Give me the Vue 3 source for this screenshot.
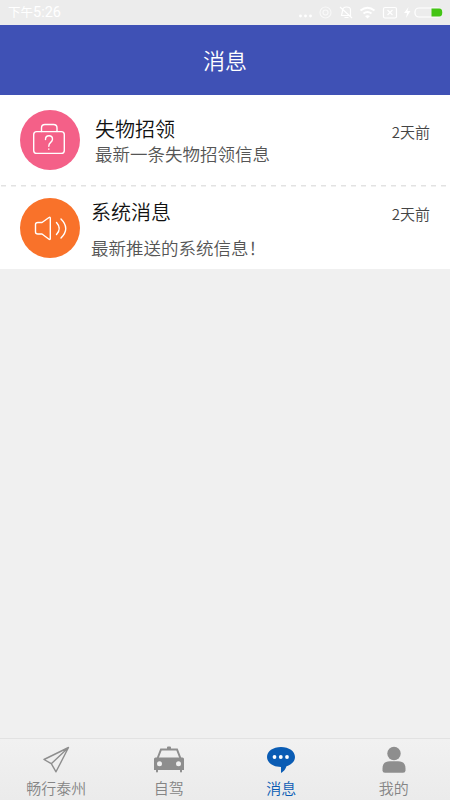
<script setup>
const messages = [
  { kind: 'lost', title: '失物招领', text: '最新一条失物招领信息', time: '2天前' },
  { kind: 'system', title: '系统消息', text: '最新推送的系统信息！', time: '2天前' },
]
const tabs = [
  { id: 'travel', label: '畅行泰州' },
  { id: 'drive', label: '自驾' },
  { id: 'message', label: '消息' },
  { id: 'mine', label: '我的' },
]
const active = 'message'
</script>

<template>
  <div class="screen">
    <div class="status">
      <span class="clock">下午<span class="digits">5:26</span></span>
      <svg class="status-icons" width="150" height="24" viewBox="0 0 150 24" fill="none" stroke="#fff" stroke-width="1.2">
        <g fill="#fff" stroke="none">
          <circle cx="2.500" cy="16" r="1.400" /><circle cx="7.500" cy="16" r="1.400" /><circle cx="12.500" cy="16" r="1.400" />
        </g>
        <g opacity=".65"><circle cx="27.500" cy="12.500" r="5.500" /><circle cx="27.500" cy="12.500" r="2.500" /></g>
        <path d="M43.500 15.500h9V10q0-3-4-3t-4 4zM46.500 17.500h4M42 7l12 11" />
        <g stroke-width="2">
          <path d="M62.500 10.500q7-5.500 14 0M65.500 13.500q4-3 8 0" />
          <path d="M67 16l2.500 2.500L72 16q-2.500-1.500-5 0z" fill="#fff" stroke="none" />
        </g>
        <rect x="85.500" y="7.500" width="13" height="10.500" rx="1.500" />
        <path d="M89.500 10l5 5M94.500 10l-5 5" />
        <path d="M110.500 7l-4.500 6h3l-1 5 4.500-7h-3z" fill="#fff" stroke="none" />
        <rect x="117" y="8" width="27" height="9" rx="4" />
        <path d="M133.500 8.500h8q2.800 0 2.800 4t-2.800 4h-8z" fill="#43c414" stroke="none" />
      </svg>
    </div>
    <header class="header">消息</header>

    <main class="list">
      <section v-for="m in messages" :key="m.kind" class="row" :class="m.kind">
        <div class="avatar">
          <svg v-if="m.kind === 'lost'" width="60" height="60" viewBox="0 0 60 60" fill="none" stroke="#fff" stroke-width="1.400" stroke-linecap="round">
            <rect x="13.700" y="21.600" width="30.600" height="21.800" rx="3" />
            <path d="M21.500 21.500V18q0-3.500 3.500-3.500h8.500q3.500 0 3.500 3.500v3.500" />
            <path d="M25.500 29.500q0-3.700 3.500-3.700t3.500 3.500q0 1.700-2 3.300-1.700 1.400-1.700 3.600M28.800 39v.3" />
          </svg>
          <svg v-else width="60" height="60" viewBox="0 0 60 60" fill="none" stroke="#fff" stroke-width="1.400" stroke-linecap="round" stroke-linejoin="round">
            <path d="M22 24.500l7-5q1.300-.8 1.300.7v20.300q0 1.500-1.300.7l-7-5.200h-4q-2.500 0-2.500-2v-7.500q0-2 2.500-2z" />
            <path d="M36.500 24.500q5.500 6 0 12M41 21q9.500 9.500 0 19" />
          </svg>
        </div>
        <div class="body">
          <div class="title">{{ m.title }}</div>
          <div class="text">{{ m.text }}</div>
        </div>
        <time class="time">{{ m.time }}</time>
      </section>
    </main>

    <nav class="tabs">
      <div v-for="t in tabs" :key="t.id" class="tab" :class="{ active: t.id === active }">
        <svg width="34" height="30" viewBox="0 0 34 30" fill="none">
          <g v-if="t.id === 'travel'" stroke="currentColor" stroke-width="1.400" stroke-linejoin="round">
            <path d="M29.500 4.500L5 16.500l7.300 4.200L17 28.800zM29.500 4.500L12.300 20.700" />
          </g>
          <template v-else-if="t.id === 'drive'">
            <path d="M5.500 15.500L9 6.500h16l3.500 9" stroke="currentColor" stroke-width="2" />
            <path d="M15 6V4.500q0-1 1-1h2q1 0 1 1V6zM3.500 14.500h27q1.500 0 1.500 1.500V27H30v1.500q0 1-1 1t-1-1V27H6v1.500q0 1-1 1t-1-1V27H2V16Q2 14.500 3.500 14.500z" fill="currentColor" />
            <circle cx="7.500" cy="20.800" r="2.500" fill="#f0f0f0" /><circle cx="26.500" cy="20.800" r="2.500" fill="#f0f0f0" />
          </template>
          <template v-else-if="t.id === 'message'">
            <path d="M17 4C9 4 3 8.300 3 14c0 5.500 5.500 9.800 14 10v6c4.500-2.500 4.500-5 5.500-6.700C27.500 21.700 31 18.300 31 14 31 8.300 25 4 17 4z" fill="currentColor" />
            <g fill="#fff"><circle cx="10.500" cy="14" r="1.900" /><circle cx="16.800" cy="14" r="1.900" /><circle cx="23" cy="14" r="1.900" /></g>
          </template>
          <template v-else>
            <circle cx="17" cy="10.500" r="6.700" fill="currentColor" />
            <path d="M13 18.200h8q7.500 0 7.500 7.300v2q0 2.300-2.500 2.300H8q-2.500 0-2.500-2.300v-2q0-7.300 7.500-7.300z" fill="currentColor" />
          </template>
        </svg>
        <span class="label">{{ t.label }}</span>
      </div>
    </nav>
  </div>
</template>

<style>
body { margin: 0; }
</style>

<style scoped>
.screen {
  width: 450px;
  height: 800px;
  display: flex;
  flex-direction: column;
  overflow: hidden;
  background: #f0f0f0;
  font-family: "Noto Sans CJK SC", sans-serif;
  font-weight: 350;
}
.status {
  display: flex;
  justify-content: space-between;
  height: 25px;
  padding: 0 5px 0 8px;
  background: #ececec;
  color: #fff;
}
.status-icons { margin-right: -3px; }
.clock { font: 12.500px/25px Roboto, "Noto Sans CJK SC", sans-serif; }
.digits { font-size: 14.500px; line-height: 1; }
.header {
  box-sizing: border-box;
  height: 70px;
  background: #3f51b5;
  color: #fff;
  font-size: 22px;
  line-height: 68px;
  text-align: center;
}
.list { background: #fff; }
.row {
  display: flex;
  box-sizing: border-box;
  padding: 0 20px;
}
.lost {
  height: 92px;
  padding-top: 15px;
  background: repeating-linear-gradient(90deg, #e2e2e2 0 5px, #fff 5px 10px) 1px 90px / 100% 1.500px no-repeat;
}
.system { height: 82px; padding-top: 11px; }
.avatar {
  width: 60px;
  height: 60px;
  border-radius: 50%;
  background: #f46088;
}
.system .avatar { background: #f9722a; }
.avatar svg { display: block; }
.body { flex: 1; margin-left: 15px; white-space: nowrap; }
.system .body { margin-left: 11px; }
.title { color: #111; font-size: 20px; line-height: 24px; margin-top: 7px; }
.text { color: #555; font-size: 17.500px; line-height: 24px; margin-top: 1px; }
.system .title { margin-top: 2px; }
.system .text { margin-top: 12px; }
.time { color: #444; font-size: 15px; line-height: 20px; margin-top: 12px; }
.system .time { margin-top: 6px; }
.tabs {
  display: flex;
  box-sizing: border-box;
  height: 62px;
  margin-top: auto;
  border-top: 1px solid #e2e2e2;
  background: linear-gradient(#f1f1f1, #ebebeb);
}
.tab {
  flex: 1;
  display: flex;
  flex-direction: column;
  align-items: center;
  padding-top: 4px;
  color: #8e8e8e;
}
.tab.active { color: #0a5cb4; }
.label { color: #858585; font-size: 15px; line-height: 22px; margin-top: 4px; }
.active .label { color: #0a5cb4; }
</style>
